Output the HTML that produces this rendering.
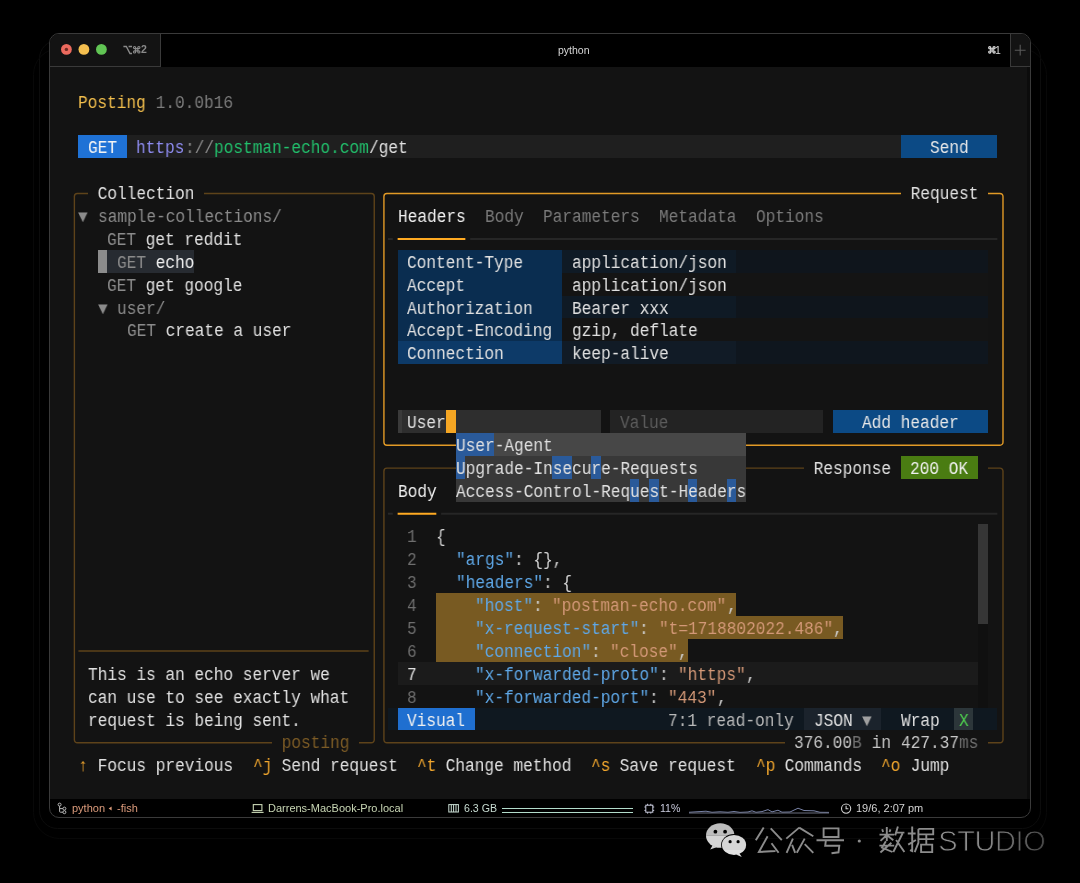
<!DOCTYPE html>
<html><head><meta charset="utf-8">
<style>
html,body{margin:0;padding:0;width:1080px;height:883px;overflow:hidden;background:#000;}
.win{position:absolute;left:49px;top:33px;width:982px;height:785px;box-sizing:border-box;border:1px solid #3a3a3a;border-radius:10px;background:#000;}
.scr{position:absolute;left:0;top:0;width:1080px;height:883px;}
.r,.b,.t,.s{position:absolute;}
.s{left:0;top:0;overflow:visible;}
.b{box-sizing:border-box;}
.t{font-family:"Liberation Mono",monospace;font-size:17.5px;line-height:22.888px;white-space:pre;transform:scaleX(0.92124);transform-origin:0 0;will-change:transform;}
.ui{font-family:"Liberation Sans",sans-serif;position:absolute;white-space:pre;will-change:transform;}
</style></head><body>
<svg class="s" width="1080" height="883">
<rect x="39.5" y="40.5" width="1001" height="788" rx="18" fill="none" stroke="#0c0c0c" stroke-width="1"/>
<rect x="33.5" y="48.5" width="1013" height="790" rx="26" fill="none" stroke="#080808" stroke-width="1"/>
</svg>
<div class="win"></div>
<div class="scr">
<div class="r" style="left:50px;top:66.7px;width:977px;height:732.4px;background:#131313"></div>
<div class="r" style="left:1027px;top:66.7px;width:3px;height:732.4px;background:#0c0c0c"></div>

<div class="r" style="left:50px;top:34px;width:110px;height:32px;background:#131313;border-top-left-radius:9px"></div>
<div class="r" style="left:160px;top:34px;width:1px;height:33px;background:#3a3a3a"></div>
<div class="r" style="left:50px;top:66px;width:110px;height:1px;background:#3a3a3a"></div>
<div class="r" style="left:1011px;top:34px;width:19px;height:32px;background:#131313;border-top-right-radius:9px"></div>
<div class="r" style="left:1010px;top:34px;width:1px;height:33px;background:#3a3a3a"></div>
<div class="r" style="left:1010px;top:66px;width:20px;height:1px;background:#3a3a3a"></div>
<svg class="s" width="1080" height="883">
<circle cx="66.4" cy="49.4" r="5.4" fill="#ec6a5e"/>
<circle cx="66.4" cy="49.4" r="1.7" fill="#6e2a22"/>
<circle cx="83.9" cy="49.4" r="5.4" fill="#f4bf4f"/>
<circle cx="101.4" cy="49.4" r="5.4" fill="#61c554"/>
<path d="M123.4 46.5 H126.3 L130 53.5 H132 M128.6 46.5 H132" stroke="#8a8a8a" stroke-width="1.4" fill="none"/>
<g transform="translate(132.4 45.4) scale(0.36)"><path d="M18 3a3 3 0 0 0-3 3v12a3 3 0 0 0 3 3 3 3 0 0 0 3-3 3 3 0 0 0-3-3H6a3 3 0 0 0-3 3 3 3 0 0 0 3 3 3 3 0 0 0 3-3V6a3 3 0 0 0-3-3 3 3 0 0 0-3 3 3 3 0 0 0 3 3h12a3 3 0 0 0 3-3 3 3 0 0 0-3-3z" stroke="#8a8a8a" stroke-width="3.2" fill="none"/></g>
<g transform="translate(987.6 45.6) scale(0.36)"><path d="M18 3a3 3 0 0 0-3 3v12a3 3 0 0 0 3 3 3 3 0 0 0 3-3 3 3 0 0 0-3-3H6a3 3 0 0 0-3 3 3 3 0 0 0 3 3 3 3 0 0 0 3-3V6a3 3 0 0 0-3-3 3 3 0 0 0-3 3 3 3 0 0 0 3 3h12a3 3 0 0 0 3-3 3 3 0 0 0-3-3z" stroke="#dcdcdc" stroke-width="3.4" fill="none"/></g>
<path d="M1014.8 50.2 H1025.6 M1020.2 44.8 V55.6" stroke="#5a5a5a" stroke-width="1.1"/>
</svg>
<div class="ui" style="left:141.4px;top:43.4px;font-size:10.5px;line-height:13px;color:#8a8a8a;font-weight:bold">2</div>
<div class="ui" style="left:558.3px;top:44px;font-size:10.5px;line-height:13px;color:#d8d8d8">python</div>
<div class="ui" style="left:995.3px;top:43.6px;font-size:10.5px;line-height:13px;color:#dcdcdc">1</div>

<span class="t" style="left:78.42px;top:91.59px;color:#f3bf4d;">Posting</span>
<span class="t" style="left:146.13px;top:91.59px;color:#7d7d7d;"> 1.0.0b16</span>
<div class="r" style="left:78.42px;top:135.36px;width:48.37px;height:22.89px;background:#1f72d6;"></div>
<span class="t" style="left:88.09px;top:137.36px;color:#f4f4f4;">GET</span>
<div class="r" style="left:126.78px;top:135.36px;width:773.84px;height:22.89px;background:#1f1f1f;"></div>
<span class="t" style="left:136.46px;top:137.36px;color:#8e8cf0;">https</span>
<span class="t" style="left:184.82px;top:137.36px;color:#8a8a8a;">://</span>
<span class="t" style="left:213.84px;top:137.36px;color:#22c06c;">postman-echo.com</span>
<span class="t" style="left:368.61px;top:137.36px;color:#e0e0e0;">/get</span>
<div class="r" style="left:900.62px;top:135.36px;width:96.73px;height:22.89px;background:#0c4a85;"></div>
<span class="t" style="left:929.64px;top:137.36px;color:#e8e8e8;">Send</span>
<svg class="s" width="1080" height="883" viewBox="0 0 1080 883"><path d="M77.38 193.48 H371.25 A3 3 0 0 1 374.25 196.48 V739.80 A3 3 0 0 1 371.25 742.80 H77.38 A3 3 0 0 1 74.38 739.80 V196.48 A3 3 0 0 1 77.38 193.48 Z" fill="none" stroke="#5e431a" stroke-width="1.40"/></svg>
<div class="r" style="left:88.09px;top:181.14px;width:116.08px;height:22.89px;background:#131313;"></div>
<span class="t" style="left:88.09px;top:183.14px;color:#e0e0e0;"> Collection </span>
<div class="r" style="left:271.88px;top:730.45px;width:87.06px;height:22.89px;background:#131313;"></div>
<span class="t" style="left:271.88px;top:732.45px;color:#7d5c26;"> posting </span>
<span class="t" style="left:78.42px;top:206.03px;color:#8b8b8b;">▼</span>
<span class="t" style="left:97.77px;top:206.03px;color:#8b8b8b;">sample-collections/</span>
<span class="t" style="left:107.44px;top:228.92px;color:#8b8b8b;">GET</span>
<span class="t" style="left:136.46px;top:228.92px;color:#e0e0e0;"> get reddit</span>
<div class="r" style="left:97.77px;top:249.80px;width:9.67px;height:22.89px;background:#8c8c8c;"></div>
<div class="r" style="left:107.44px;top:249.80px;width:87.06px;height:22.89px;background:#272b31;"></div>
<span class="t" style="left:117.11px;top:251.80px;color:#8b8b8b;">GET</span>
<span class="t" style="left:146.13px;top:251.80px;color:#f2f2f2;"> echo</span>
<span class="t" style="left:107.44px;top:274.69px;color:#8b8b8b;">GET</span>
<span class="t" style="left:136.46px;top:274.69px;color:#e0e0e0;"> get google</span>
<span class="t" style="left:97.77px;top:297.58px;color:#8b8b8b;">▼</span>
<span class="t" style="left:117.11px;top:297.58px;color:#8b8b8b;">user/</span>
<span class="t" style="left:126.78px;top:320.47px;color:#8b8b8b;">GET</span>
<span class="t" style="left:155.80px;top:320.47px;color:#e0e0e0;"> create a user</span>
<svg class="s" width="1080" height="883" viewBox="0 0 1080 883"><path d="M78.42 651.04 H368.61" stroke="#5e431a" stroke-width="1.40"/></svg>
<span class="t" style="left:88.09px;top:663.79px;color:#e0e0e0;">This is an echo server we</span>
<span class="t" style="left:88.09px;top:686.68px;color:#e0e0e0;">can use to see exactly what</span>
<span class="t" style="left:88.09px;top:709.56px;color:#e0e0e0;">request is being sent.</span>
<svg class="s" width="1080" height="883" viewBox="0 0 1080 883"><path d="M386.92 193.48 H999.99 A3 3 0 0 1 1002.99 196.48 V442.25 A3 3 0 0 1 999.99 445.25 H386.92 A3 3 0 0 1 383.92 442.25 V196.48 A3 3 0 0 1 386.92 193.48 Z" fill="none" stroke="#e29a26" stroke-width="1.40"/></svg>
<div class="r" style="left:900.62px;top:181.14px;width:87.06px;height:22.89px;background:#131313;"></div>
<span class="t" style="left:900.62px;top:183.14px;color:#e0e0e0;"> Request </span>
<span class="t" style="left:397.63px;top:206.03px;color:#f2f2f2;">Headers</span>
<span class="t" style="left:484.69px;top:206.03px;color:#7a7a7a;">Body</span>
<span class="t" style="left:542.72px;top:206.03px;color:#7a7a7a;">Parameters</span>
<span class="t" style="left:658.80px;top:206.03px;color:#7a7a7a;">Metadata</span>
<span class="t" style="left:755.53px;top:206.03px;color:#7a7a7a;">Options</span>
<svg class="s" width="1080" height="883" viewBox="0 0 1080 883"><path d="M387.95 239.06 H392.79" stroke="#282828" stroke-width="2.00"/></svg>
<svg class="s" width="1080" height="883" viewBox="0 0 1080 883"><path d="M397.63 239.06 H465.34" stroke="#ffaa22" stroke-width="2.00"/></svg>
<svg class="s" width="1080" height="883" viewBox="0 0 1080 883"><path d="M470.18 239.06 H997.35" stroke="#262626" stroke-width="2.00"/></svg>
<div class="r" style="left:397.63px;top:249.80px;width:164.44px;height:22.89px;background:#0a2d50;"></div>
<div class="r" style="left:562.07px;top:249.80px;width:174.11px;height:22.89px;background:#0f1a25;"></div>
<div class="r" style="left:736.18px;top:249.80px;width:251.50px;height:22.89px;background:#0f151c;"></div>
<span class="t" style="left:407.30px;top:251.80px;color:#e0e0e0;">Content-Type</span>
<span class="t" style="left:571.74px;top:251.80px;color:#e0e0e0;">application/json</span>
<div class="r" style="left:397.63px;top:272.69px;width:164.44px;height:22.89px;background:#0a2d50;"></div>
<div class="r" style="left:562.07px;top:272.69px;width:425.61px;height:22.89px;background:#141414;"></div>
<span class="t" style="left:407.30px;top:274.69px;color:#e0e0e0;">Accept</span>
<span class="t" style="left:571.74px;top:274.69px;color:#e0e0e0;">application/json</span>
<div class="r" style="left:397.63px;top:295.58px;width:164.44px;height:22.89px;background:#0a2d50;"></div>
<div class="r" style="left:562.07px;top:295.58px;width:174.11px;height:22.89px;background:#0f1a25;"></div>
<div class="r" style="left:736.18px;top:295.58px;width:251.50px;height:22.89px;background:#0f151c;"></div>
<span class="t" style="left:407.30px;top:297.58px;color:#e0e0e0;">Authorization</span>
<span class="t" style="left:571.74px;top:297.58px;color:#e0e0e0;">Bearer xxx</span>
<div class="r" style="left:397.63px;top:318.47px;width:164.44px;height:22.89px;background:#0a2d50;"></div>
<div class="r" style="left:562.07px;top:318.47px;width:425.61px;height:22.89px;background:#141414;"></div>
<span class="t" style="left:407.30px;top:320.47px;color:#e0e0e0;">Accept-Encoding</span>
<span class="t" style="left:571.74px;top:320.47px;color:#e0e0e0;">gzip, deflate</span>
<div class="r" style="left:397.63px;top:341.36px;width:164.44px;height:22.89px;background:#0d3a68;"></div>
<div class="r" style="left:562.07px;top:341.36px;width:174.11px;height:22.89px;background:#111b26;"></div>
<div class="r" style="left:736.18px;top:341.36px;width:251.50px;height:22.89px;background:#0f161e;"></div>
<span class="t" style="left:407.30px;top:343.36px;color:#e0e0e0;">Connection</span>
<span class="t" style="left:571.74px;top:343.36px;color:#e0e0e0;">keep-alive</span>
<div class="r" style="left:397.63px;top:410.02px;width:203.13px;height:22.89px;background:#2e2e2e;"></div>
<div class="r" style="left:397.63px;top:410.02px;width:4.50px;height:22.89px;background:#3a3a3a;"></div>
<span class="t" style="left:407.30px;top:412.02px;color:#e0e0e0;">User</span>
<div class="r" style="left:445.99px;top:410.02px;width:9.67px;height:22.89px;background:#f5a623;"></div>
<div class="r" style="left:610.43px;top:410.02px;width:212.81px;height:22.89px;background:#232323;"></div>
<span class="t" style="left:620.11px;top:412.02px;color:#5c5c5c;">Value</span>
<div class="r" style="left:832.91px;top:410.02px;width:154.77px;height:22.89px;background:#0c4a85;"></div>
<span class="t" style="left:861.93px;top:412.02px;color:#e8e8e8;">Add header</span>
<svg class="s" width="1080" height="883" viewBox="0 0 1080 883"><path d="M386.92 468.14 H999.99 A3 3 0 0 1 1002.99 471.14 V739.80 A3 3 0 0 1 999.99 742.80 H386.92 A3 3 0 0 1 383.92 739.80 V471.14 A3 3 0 0 1 386.92 468.14 Z" fill="none" stroke="#5e431a" stroke-width="1.40"/></svg>
<div class="r" style="left:803.89px;top:455.80px;width:96.73px;height:22.89px;background:#131313;"></div>
<span class="t" style="left:803.89px;top:457.80px;color:#e0e0e0;"> Response </span>
<div class="r" style="left:900.62px;top:455.80px;width:77.38px;height:22.89px;background:#4a7c12;"></div>
<span class="t" style="left:910.30px;top:457.80px;color:#f0f0f0;">200 OK</span>
<div class="r" style="left:978.01px;top:455.80px;width:9.67px;height:22.89px;background:#131313;"></div>
<span class="t" style="left:397.63px;top:480.68px;color:#f0f0f0;">Body</span>
<svg class="s" width="1080" height="883" viewBox="0 0 1080 883"><path d="M387.95 513.72 H392.79" stroke="#282828" stroke-width="2.00"/></svg>
<svg class="s" width="1080" height="883" viewBox="0 0 1080 883"><path d="M397.63 513.72 H436.32" stroke="#ffaa22" stroke-width="2.00"/></svg>
<svg class="s" width="1080" height="883" viewBox="0 0 1080 883"><path d="M441.16 513.72 H997.35" stroke="#262626" stroke-width="2.00"/></svg>
<div class="r" style="left:978.01px;top:524.46px;width:9.67px;height:183.10px;background:#101010;"></div>
<div class="r" style="left:978.01px;top:524.46px;width:9.67px;height:99.54px;background:#363636;"></div>
<div class="r" style="left:397.63px;top:661.79px;width:580.38px;height:22.89px;background:#1b1b1b;"></div>
<div class="r" style="left:436.32px;top:593.12px;width:299.86px;height:22.89px;background:#785a22;"></div>
<div class="r" style="left:436.32px;top:616.01px;width:406.27px;height:22.89px;background:#785a22;"></div>
<div class="r" style="left:436.32px;top:638.90px;width:251.50px;height:22.89px;background:#785a22;"></div>
<span class="t" style="left:407.30px;top:526.46px;color:#6e6e6e;">1</span>
<span class="t" style="left:436.32px;top:526.46px;color:#d0d0d0;">{</span>
<span class="t" style="left:407.30px;top:549.35px;color:#6e6e6e;">2</span>
<span class="t" style="left:436.32px;top:549.35px;color:#d0d0d0;">  </span>
<span class="t" style="left:455.67px;top:549.35px;color:#5fa8e8;">"args"</span>
<span class="t" style="left:513.70px;top:549.35px;color:#d0d0d0;">: {},</span>
<span class="t" style="left:407.30px;top:572.24px;color:#6e6e6e;">3</span>
<span class="t" style="left:436.32px;top:572.24px;color:#d0d0d0;">  </span>
<span class="t" style="left:455.67px;top:572.24px;color:#5fa8e8;">"headers"</span>
<span class="t" style="left:542.72px;top:572.24px;color:#d0d0d0;">: {</span>
<span class="t" style="left:407.30px;top:595.12px;color:#6e6e6e;">4</span>
<span class="t" style="left:436.32px;top:595.12px;color:#d0d0d0;">    </span>
<span class="t" style="left:475.01px;top:595.12px;color:#5fa8e8;">"host"</span>
<span class="t" style="left:533.05px;top:595.12px;color:#d0d0d0;">: </span>
<span class="t" style="left:552.40px;top:595.12px;color:#d39877;">"postman-echo.com"</span>
<span class="t" style="left:726.51px;top:595.12px;color:#d0d0d0;">,</span>
<span class="t" style="left:407.30px;top:618.01px;color:#6e6e6e;">5</span>
<span class="t" style="left:436.32px;top:618.01px;color:#d0d0d0;">    </span>
<span class="t" style="left:475.01px;top:618.01px;color:#5fa8e8;">"x-request-start"</span>
<span class="t" style="left:639.45px;top:618.01px;color:#d0d0d0;">: </span>
<span class="t" style="left:658.80px;top:618.01px;color:#d39877;">"t=1718802022.486"</span>
<span class="t" style="left:832.91px;top:618.01px;color:#d0d0d0;">,</span>
<span class="t" style="left:407.30px;top:640.90px;color:#6e6e6e;">6</span>
<span class="t" style="left:436.32px;top:640.90px;color:#d0d0d0;">    </span>
<span class="t" style="left:475.01px;top:640.90px;color:#5fa8e8;">"connection"</span>
<span class="t" style="left:591.09px;top:640.90px;color:#d0d0d0;">: </span>
<span class="t" style="left:610.43px;top:640.90px;color:#d39877;">"close"</span>
<span class="t" style="left:678.14px;top:640.90px;color:#d0d0d0;">,</span>
<span class="t" style="left:407.30px;top:663.79px;color:#e0e0e0;">7</span>
<span class="t" style="left:436.32px;top:663.79px;color:#d0d0d0;">    </span>
<span class="t" style="left:475.01px;top:663.79px;color:#5fa8e8;">"x-forwarded-proto"</span>
<span class="t" style="left:658.80px;top:663.79px;color:#d0d0d0;">: </span>
<span class="t" style="left:678.14px;top:663.79px;color:#d39877;">"https"</span>
<span class="t" style="left:745.86px;top:663.79px;color:#d0d0d0;">,</span>
<span class="t" style="left:407.30px;top:686.68px;color:#6e6e6e;">8</span>
<span class="t" style="left:436.32px;top:686.68px;color:#d0d0d0;">    </span>
<span class="t" style="left:475.01px;top:686.68px;color:#5fa8e8;">"x-forwarded-port"</span>
<span class="t" style="left:649.13px;top:686.68px;color:#d0d0d0;">: </span>
<span class="t" style="left:668.47px;top:686.68px;color:#d39877;">"443"</span>
<span class="t" style="left:716.84px;top:686.68px;color:#d0d0d0;">,</span>
<div class="r" style="left:387.95px;top:707.56px;width:609.40px;height:22.89px;background:#0f1820;"></div>
<div class="r" style="left:397.63px;top:707.56px;width:77.38px;height:22.89px;background:#1f6fd0;"></div>
<span class="t" style="left:407.30px;top:709.56px;color:#f0f0f0;">Visual</span>
<span class="t" style="left:668.47px;top:709.56px;color:#b8b8b8;">7:1 read-only</span>
<div class="r" style="left:803.89px;top:707.56px;width:77.38px;height:22.89px;background:#1b232c;"></div>
<span class="t" style="left:813.57px;top:709.56px;color:#e0e0e0;">JSON</span>
<span class="t" style="left:861.93px;top:709.56px;color:#a0a0a0;">▼</span>
<span class="t" style="left:900.62px;top:709.56px;color:#e0e0e0;">Wrap</span>
<div class="r" style="left:953.83px;top:707.56px;width:19.35px;height:22.89px;background:#2c363a;"></div>
<span class="t" style="left:958.66px;top:709.56px;color:#4fd14f;">X</span>
<div class="r" style="left:784.55px;top:730.45px;width:203.13px;height:22.89px;background:#131313;"></div>
<span class="t" style="left:794.22px;top:732.45px;color:#c8c8c8;">376.00</span>
<span class="t" style="left:852.26px;top:732.45px;color:#707070;">B</span>
<span class="t" style="left:861.93px;top:732.45px;color:#c8c8c8;"> in </span>
<span class="t" style="left:900.62px;top:732.45px;color:#c8c8c8;">427.37</span>
<span class="t" style="left:958.66px;top:732.45px;color:#707070;">ms</span>
<div class="r" style="left:455.67px;top:432.91px;width:290.19px;height:22.89px;background:#474747;"></div>
<div class="r" style="left:455.67px;top:455.80px;width:290.19px;height:45.78px;background:#383838;"></div>
<div class="r" style="left:455.67px;top:432.91px;width:9.67px;height:22.89px;background:#2a5a9a;"></div>
<div class="r" style="left:465.34px;top:432.91px;width:9.67px;height:22.89px;background:#2a5a9a;"></div>
<div class="r" style="left:475.01px;top:432.91px;width:9.67px;height:22.89px;background:#2a5a9a;"></div>
<div class="r" style="left:484.69px;top:432.91px;width:9.67px;height:22.89px;background:#2a5a9a;"></div>
<div class="r" style="left:455.67px;top:455.80px;width:9.67px;height:22.89px;background:#2a5a9a;"></div>
<div class="r" style="left:552.40px;top:455.80px;width:9.67px;height:22.89px;background:#2a5a9a;"></div>
<div class="r" style="left:562.07px;top:455.80px;width:9.67px;height:22.89px;background:#2a5a9a;"></div>
<div class="r" style="left:591.09px;top:455.80px;width:9.67px;height:22.89px;background:#2a5a9a;"></div>
<div class="r" style="left:629.78px;top:478.68px;width:9.67px;height:22.89px;background:#2a5a9a;"></div>
<div class="r" style="left:649.13px;top:478.68px;width:9.67px;height:22.89px;background:#2a5a9a;"></div>
<div class="r" style="left:687.82px;top:478.68px;width:9.67px;height:22.89px;background:#2a5a9a;"></div>
<div class="r" style="left:726.51px;top:478.68px;width:9.67px;height:22.89px;background:#2a5a9a;"></div>
<span class="t" style="left:455.67px;top:434.91px;color:#e0e0e0;">User-Agent</span>
<span class="t" style="left:455.67px;top:457.80px;color:#e0e0e0;">Upgrade-Insecure-Requests</span>
<span class="t" style="left:455.67px;top:480.68px;color:#e0e0e0;">Access-Control-Request-Headers</span>
<span class="t" style="left:78.42px;top:755.34px;color:#f2a72e;">↑</span>
<span class="t" style="left:88.09px;top:755.34px;color:#e0e0e0;"> Focus previous  </span>
<span class="t" style="left:252.53px;top:755.34px;color:#f2a72e;">^j</span>
<span class="t" style="left:271.88px;top:755.34px;color:#e0e0e0;"> Send request  </span>
<span class="t" style="left:416.97px;top:755.34px;color:#f2a72e;">^t</span>
<span class="t" style="left:436.32px;top:755.34px;color:#e0e0e0;"> Change method  </span>
<span class="t" style="left:591.09px;top:755.34px;color:#f2a72e;">^s</span>
<span class="t" style="left:610.43px;top:755.34px;color:#e0e0e0;"> Save request  </span>
<span class="t" style="left:755.53px;top:755.34px;color:#f2a72e;">^p</span>
<span class="t" style="left:774.88px;top:755.34px;color:#e0e0e0;"> Commands  </span>
<span class="t" style="left:881.28px;top:755.34px;color:#f2a72e;">^o</span>
<span class="t" style="left:900.62px;top:755.34px;color:#e0e0e0;"> Jump</span>

<svg class="s" width="1080" height="883">
<g fill="none" stroke="#b8b8b8" stroke-width="1">
<circle cx="59.6" cy="804.6" r="1.5"/><circle cx="64.4" cy="808.6" r="1.5"/><circle cx="64.4" cy="812.2" r="1.5"/>
<path d="M59.6 806.1 V811.5 Q59.6 812.2 60.4 812.2 H62.9 M59.6 808.6 H62.9"/>
</g>
<path d="M108.6 808.4 l3 -2 v4z" fill="#dd9c7c"/>
<g fill="none" stroke="#c8d6b4" stroke-width="1.1">
<rect x="253.3" y="804.6" width="8.6" height="6"/>
<path d="M251.6 812.4 H263.6"/>
</g>
<g fill="none" stroke="#c8dcd2" stroke-width="1">
<rect x="448.8" y="804.6" width="9.6" height="7.4"/>
<path d="M451.3 804.6 V812 M453.6 804.6 V812 M456 804.6 V812"/>
</g>
<path d="M502 808.5 H633 M502 812.5 H633" stroke="#b2dccb" stroke-width="1"/>
<g fill="none" stroke="#c8cadc" stroke-width="1">
<rect x="645.8" y="805.2" width="7" height="7"/>
<path d="M647.6 803.8 V805.2 M650.8 803.8 V805.2 M647.6 812.2 V813.6 M650.8 812.2 V813.6 M644.4 807 H645.8 M644.4 810.4 H645.8 M652.8 807 H654.2 M652.8 810.4 H654.2"/>
</g>
<polyline fill="none" stroke="#7a84a8" stroke-width="1" points="689,812.3 700,811.6 706,811.2 712,812.3 720,811.8 728,812.3 734,811.5 740,812.4 748,812.0 752,810.8 756,812.3 762,811.6 768,809.6 772,811.9 778,810.2 782,812.2 790,812.0 798,808.2 804,810.5 814,810.8 820,812.3 829,812.4"/>
<polyline fill="none" stroke="#6a6f7e" stroke-width="1" points="689,813 829,813"/>
<g fill="none" stroke="#d0d0d0" stroke-width="1.1">
<circle cx="846.1" cy="808.6" r="4.6"/>
<path d="M846.1 805.8 V808.8 H848.4"/>
</g>
</svg>
<div class="ui" style="left:71.5px;top:801.9px;font-size:11px;line-height:13px;color:#dd9c7c">python</div>
<div class="ui" style="left:116.8px;top:801.9px;font-size:11px;line-height:13px;color:#dd9c7c">-fish</div>
<div class="ui" style="left:268.3px;top:801.9px;font-size:11px;line-height:13px;color:#c8d6b4">Darrens-MacBook-Pro.local</div>
<div class="ui" style="left:463.6px;top:801.9px;font-size:10.6px;line-height:13px;color:#c8dcd2">6.3 GB</div>
<div class="ui" style="left:659.5px;top:801.9px;font-size:10.6px;line-height:13px;color:#c8cadc">11%</div>
<div class="ui" style="left:855.7px;top:801.9px;font-size:11px;line-height:13px;color:#d4d4d4">19/6, 2:07 pm</div>

</div>

<svg class="s" width="1080" height="883">
<defs>
<linearGradient id="wg" x1="0" y1="0" x2="1" y2="0"><stop offset="0" stop-color="#909090"/><stop offset="0.45" stop-color="#8a8a8a"/><stop offset="0.68" stop-color="#6c6c6c"/><stop offset="0.85" stop-color="#585858"/><stop offset="1" stop-color="#464646"/></linearGradient>
<clipPath id="bt"><rect x="700" y="818" width="60" height="17.3"/></clipPath>
<clipPath id="bb"><rect x="700" y="835.3" width="60" height="30"/></clipPath>
<clipPath id="st"><rect x="700" y="818" width="60" height="31.9"/></clipPath>
<clipPath id="sb"><rect x="700" y="849.9" width="60" height="20"/></clipPath>
</defs>
<g>
<path d="M712.5 845.5 L710.2 849.6 L716.5 847.2 Z" fill="#d0d0d0"/>
<ellipse cx="720.2" cy="835.5" rx="14.2" ry="12.3" fill="#bdbdbd" clip-path="url(#bt)"/>
<ellipse cx="720.2" cy="835.5" rx="14.2" ry="12.3" fill="#d4d4d4" clip-path="url(#bb)"/>
<circle cx="715.4" cy="831.7" r="1.9" fill="#000"/><circle cx="725.1" cy="831.7" r="1.9" fill="#000"/>
<ellipse cx="734" cy="844.9" rx="12.9" ry="10.8" fill="#000"/>
<path d="M739.5 853.5 L741.8 857 L736 854.6 Z" fill="#dcdcdc"/>
<ellipse cx="734" cy="844.9" rx="12.1" ry="10" fill="#d6d6d6" clip-path="url(#st)"/>
<ellipse cx="734" cy="844.9" rx="12.1" ry="10" fill="#e2e2e2" clip-path="url(#sb)"/>
<circle cx="730.1" cy="841.7" r="1.6" fill="#000"/><circle cx="738.1" cy="841.7" r="1.6" fill="#000"/>
</g>
<g fill="none" stroke="#8c8c8c" stroke-width="1.9" stroke-linecap="butt" stroke-linejoin="miter">
<g transform="translate(755 826.8)">
<path d="M8.7 0.8 L0.8 13.4 M15.7 1.6 L26.8 13.4 M12.6 9.4 L3.9 25.2 L20.5 24.2 M16.5 16.5 L23.6 26"/>
</g>
<g transform="translate(785.8 826.8)">
<path d="M13.4 0.8 L0.5 11.8 M13.4 0.8 L27.5 9.4 M7.1 11.8 L0.8 26 M6.3 18 L9.4 26 M18.9 11.8 L11 26 M18.9 17.3 L27.5 26"/>
</g>
<g transform="translate(816.5 826.8)">
<path d="M7.1 1.6 H22 V10.2 H7.1 Z M0 13.4 H27.5 M9.4 13.4 L8.7 19 H22.8 L22 25.5 L15 26.5"/>
</g>
<g transform="translate(878.5 826.5)">
<path d="M3.7 2.8 L4.6 5.5 M12 2.8 L11 5.5 M1 8.1 H15.7 M8.3 0.6 V14.4 M8.3 8.5 L2 14.4 M8.3 8.5 L14.8 13.7 M0.9 19.1 H15.7 M7.4 14.8 L3.5 21 L13.9 25.5 M12.9 16.3 L1.9 26 M19.4 0 L16.7 8.9 M17.6 6.1 H25.9 M24 7 L14.8 25.5 M17.6 13.5 L25.9 25.5"/>
</g>
<g transform="translate(907.8 826.5)">
<path d="M0 7 H7.8 M4.4 0 V24.6 L2.2 23.7 M0.4 18.1 L8.1 13.5 M10.6 2.4 H25.4 V7.9 H10.6 M10.6 2.4 V16.3 L6.9 25.6 M11.5 12.6 H26.3 M18.5 7.9 V18.1 M13.3 18.1 H24.4 V25.6 H13.3 Z"/>
</g>
</g>
<circle cx="859.3" cy="841" r="1.6" fill="#8c8c8c"/>
<text x="938.2" y="850.6" font-family="Liberation Sans" font-size="29" letter-spacing="-0.4" fill="url(#wg)" stroke="#000" stroke-width="0.9">STUDIO</text>
</svg>

</body></html>
